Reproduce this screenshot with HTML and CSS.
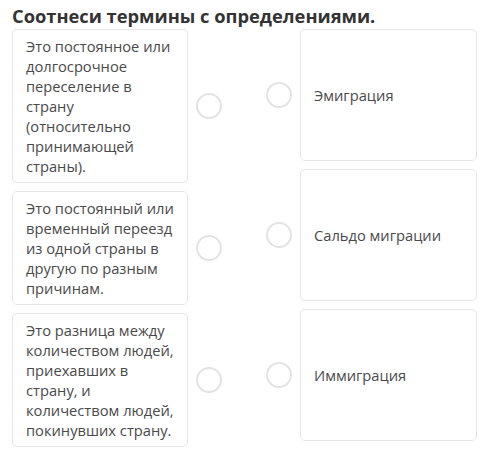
FILE: index.html
```html
<!DOCTYPE html>
<html lang="ru">
<head>
<meta charset="utf-8">
<link rel="stylesheet" href="styles.css">
</head>
<body>
<h1 class="title">Соотнеси термины с определениями.</h1>
<div class="board">
  <div class="col col-left">
    <div class="item">
      <div class="card">Это постоянное или долгосрочное переселение в страну (относительно принимающей страны).</div>
      <span class="dot"></span>
    </div>
    <div class="item">
      <div class="card">Это постоянный или временный переезд из одной страны в другую по разным причинам.</div>
      <span class="dot"></span>
    </div>
    <div class="item">
      <div class="card">Это разница между количеством людей, приехавших в страну, и количеством людей, покинувших страну.</div>
      <span class="dot"></span>
    </div>
  </div>
  <div class="col col-right">
    <div class="item">
      <span class="dot"></span>
      <div class="card term">Эмиграция</div>
    </div>
    <div class="item">
      <span class="dot"></span>
      <div class="card term">Сальдо миграции</div>
    </div>
    <div class="item">
      <span class="dot"></span>
      <div class="card term">Иммиграция</div>
    </div>
  </div>
</div>
</body>
</html>
```

FILE: styles.css
```css
* { box-sizing: border-box; }
html, body { margin: 0; padding: 0; background: #fff; }
body {
  font-family: "Open Sans", "Liberation Sans", sans-serif;
  color: #4a4a4a;
  width: 500px;
}
.title {
  margin: 4px 0 1px 12px;
  font-size: 18.3px;
  line-height: 24px;
  font-weight: 700;
  color: #333;
}
.board {
  display: flex;
  gap: 44px;
  padding-left: 12px;
}
.col {
  display: flex;
  flex-direction: column;
  gap: 8px;
}
.col-left { width: 210px; }
.col-right { width: 211px; }
.item {
  display: flex;
  align-items: center;
  gap: 8px;
}
.card {
  flex: 1;
  border: 1px solid #e6e6e6;
  border-radius: 5px;
  background: #fff;
  padding: 6px 6px 6px 13px;
  font-size: 14.7px;
  line-height: 20px;
}
.term {
  min-height: 132px;
  display: flex;
  align-items: center;
  padding-left: 13px;
}
.dot {
  flex: none;
  width: 26px;
  height: 26px;
  border: 2px solid #e3e3e3;
  border-radius: 50%;
}
```
